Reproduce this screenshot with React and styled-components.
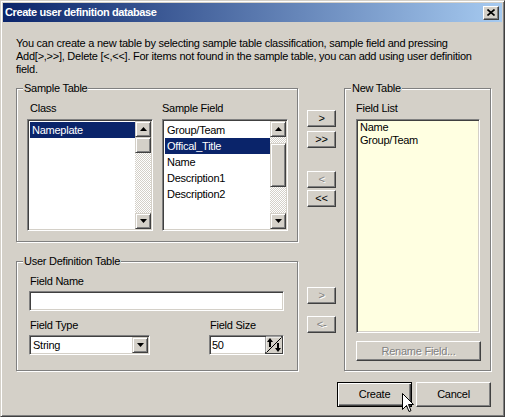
import styled, { createGlobalStyle } from 'styled-components';

const FACE = '#d4d0c8';

const GlobalStyle = createGlobalStyle`
  body { margin: 0; background: #fff; }
  * { box-sizing: border-box; }
`;

const Window = styled.div`
  position: relative;
  width: 505px;
  height: 417px;
  background: ${FACE};
  border: 1px solid;
  border-color: ${FACE} #404040 #404040 ${FACE};
  box-shadow: inset 1px 1px #fff, inset -1px -1px #808080;
  padding: 2px;
  display: flex;
  flex-direction: column;
  font-family: 'Liberation Sans', Tahoma, sans-serif;
  font-size: 11px;
  line-height: 13px;
  letter-spacing: -0.25px;
  color: #000;
`;

const TitleBar = styled.div`
  height: 19px;
  display: flex;
  align-items: center;
  justify-content: space-between;
  padding: 0 3px 0 2px;
  background: linear-gradient(to right, #0a246a, #a6caf0);
`;

const Title = styled.span`
  color: #fff;
  font-weight: bold;
  font-size: 11px;
  letter-spacing: -0.4px;
`;

const CloseBox = styled.div`
  width: 16px;
  height: 14px;
  display: flex;
  align-items: center;
  justify-content: center;
  background: ${FACE};
  border: 1px solid;
  border-color: #fff #404040 #404040 #fff;
  box-shadow: inset -1px -1px #808080;
`;

const Body = styled.div`
  padding: 15px 11px 0 13px;
  display: flex;
  flex-direction: column;
`;

const Intro = styled.p`
  margin: 0;
  white-space: nowrap;
`;

const Main = styled.div`
  display: grid;
  grid-template-columns: 282px 30px 147px;
  grid-template-rows: auto auto;
  column-gap: 8px;
  row-gap: 13px;
  margin-top: 6px;
`;

const Group = styled.fieldset`
  margin: 0;
  min-width: 0;
  padding: 0;
  border: 1px solid #808080;
  box-shadow: 1px 1px 0 #fff, inset 1px 1px 0 #fff;
  grid-column: ${(p) => p.$col || 'auto'};
  grid-row: ${(p) => p.$row || 'auto'};
  display: flex;
  flex-direction: column;
`;

const Inner = styled.div`
  padding: ${(p) => p.$pad};
  display: flex;
  flex-direction: column;
`;

const Legend = styled.legend`
  margin-left: 6px;
  padding: 0 1px;
  background: ${FACE};
`;

const Columns = styled.div`
  display: flex;
  gap: 9px;
`;

const Field = styled.div`
  display: flex;
  flex-direction: column;
  gap: ${(p) => p.$gap ?? 4}px;
`;

const Label = styled.span`
  display: block;
  padding-left: ${(p) => p.$indent || 0}px;
`;

const Sunken = styled.div`
  background: ${(p) => p.$bg || '#fff'};
  border: 1px solid;
  border-color: #808080 #fff #fff #808080;
  box-shadow: inset 1px 1px #404040, inset -1px -1px ${FACE};
  padding: 1px;
`;

const ListBox = styled(Sunken)`
  width: 126px;
  height: 112px;
  display: flex;
`;

const Items = styled.div`
  flex: 1;
  padding: 1px 0 0 1px;
`;

const Item = styled.div`
  height: 16px;
  line-height: 16px;
  padding-left: 2px;
  background: ${(p) => (p.$selected ? '#0a246a' : 'transparent')};
  color: ${(p) => (p.$selected ? '#fff' : '#000')};
  white-space: nowrap;
`;

const ScrollBar = styled.div`
  width: 16px;
  display: flex;
  flex-direction: column;
`;

const Raised = styled.div`
  background: ${FACE};
  border: 1px solid;
  border-color: ${FACE} #404040 #404040 ${FACE};
  box-shadow: inset 1px 1px #fff, inset -1px -1px #808080;
`;

const ArrowBox = styled(Raised)`
  width: 16px;
  height: 16px;
  flex: none;
  display: flex;
  align-items: center;
  justify-content: center;
`;

const Track = styled.div`
  flex: 1;
  display: flex;
  flex-direction: column;
  background: repeating-conic-gradient(#fff 0% 25%, ${FACE} 0% 50%) 0 0 / 2px 2px;
`;

const Thumb = styled(Raised)`
  width: 16px;
  flex: none;
`;

const Memo = styled(Sunken)`
  height: 214px;
  padding: 1px 3px;
`;

const TextBox = styled(Sunken)`
  width: ${(p) => p.$w}px;
  height: 20px;
  display: flex;
  align-items: center;
  padding: 1px 1px 1px 2px;
`;

const BoxText = styled.span`
  flex: 1;
  padding-left: ${(p) => p.$indent || 0}px;
`;

const DropBtn = styled(Raised)`
  width: 16px;
  height: 16px;
  display: flex;
  align-items: center;
  justify-content: center;
`;

const SpinBtn = styled.div`
  width: 18px;
  height: 18px;
  margin: -1px -1px -1px 0;
  display: flex;
`;

const Row = styled.div`
  display: flex;
  justify-content: space-between;
  margin-top: 8px;
`;

const MidCol = styled.div`
  display: flex;
  flex-direction: column;
  align-items: flex-end;
  padding-top: ${(p) => p.$top}px;
`;

const Button = styled.button`
  font: inherit;
  letter-spacing: inherit;
  line-height: 13px;
  margin: ${(p) => p.$mt || 0}px 0 0 0;
  padding: 0;
  width: ${(p) => p.$w}px;
  height: ${(p) => p.$h}px;
  background: ${FACE};
  border: 1px solid;
  border-color: #fff #404040 #404040 #fff;
  box-shadow: inset -1px -1px #808080;
  color: #000;
  &:disabled {
    color: #808080;
    text-shadow: 1px 1px #fff;
  }
`;

const DefaultButton = styled(Button)`
  border-color: #000;
  box-shadow: inset 1px 1px #fff, inset -1px -1px #404040, inset -2px -2px #808080;
`;

const Footer = styled.div`
  display: flex;
  justify-content: flex-end;
  gap: 4px;
  margin-top: 11px;
`;

const Cursor = styled.svg`
  position: absolute;
  left: 401px;
  top: 392px;
`;

const Tri = ({ down }) => (
  <svg width="7" height="4" viewBox="0 0 7 4">
    <polygon points={down ? '0,0 7,0 3.5,4' : '0,4 7,4 3.5,0'} fill="#000" />
  </svg>
);

const List = ({ items, selected, thumbTop, thumbHeight }) => (
  <ListBox>
    <Items>
      {items.map((t) => (
        <Item key={t} $selected={t === selected}>
          {t}
        </Item>
      ))}
    </Items>
    <ScrollBar>
      <ArrowBox>
        <Tri />
      </ArrowBox>
      <Track>
        <Thumb style={{ marginTop: thumbTop, height: thumbHeight }} />
      </Track>
      <ArrowBox>
        <Tri down />
      </ArrowBox>
    </ScrollBar>
  </ListBox>
);

const SpinIcon = () => (
  <svg width="18" height="18" viewBox="0 0 18 18">
    <rect x="0.5" y="0.5" width="17" height="17" fill={FACE} stroke="#404040" />
    <line x1="1" y1="1" x2="16" y2="1" stroke="#fff" />
    <line x1="1" y1="1" x2="1" y2="16" stroke="#fff" />
    <line x1="1.5" y1="16.5" x2="16.5" y2="1.5" stroke="#000" />
    <polygon points="5,2 2,6 8,6" fill="#000" />
    <rect x="4" y="6" width="2" height="5" fill="#000" />
    <polygon points="13,16 10,12 16,12" fill="#000" />
    <rect x="12" y="7" width="2" height="5" fill="#000" />
  </svg>
);

export default function App() {
  return (
    <>
      <GlobalStyle />
      <Window>
        <TitleBar>
          <Title>Create user definition database</Title>
          <CloseBox>
            <svg width="8" height="7" viewBox="0 0 8 7">
              <path d="M0.5 0.5 L7.5 6.5 M7.5 0.5 L0.5 6.5" stroke="#000" strokeWidth="1.6" />
            </svg>
          </CloseBox>
        </TitleBar>
        <Body>
          <Intro>
            You can create a new table by selecting sample table classification, sample field and pressing
            <br />
            Add[&gt;,&gt;&gt;], Delete [&lt;,&lt;&lt;]. For items not found in the sample table, you can add using user definition
            <br />
            field.
          </Intro>
          <Main>
            <Group>
              <Legend>Sample Table</Legend>
              <Inner $pad="7px 9px 10px 10px">
                <Columns>
                  <Field>
                    <Label $indent={3}>Class</Label>
                    <List items={['Nameplate']} selected="Nameplate" thumbTop={0} thumbHeight={16} />
                  </Field>
                  <Field>
                    <Label>Sample Field</Label>
                    <List
                      items={['Group/Team', 'Offical_Title', 'Name', 'Description1', 'Description2']}
                      selected="Offical_Title"
                      thumbTop={6}
                      thumbHeight={44}
                    />
                  </Field>
                </Columns>
              </Inner>
            </Group>

            <MidCol $top={28}>
              <Button $w={29} $h={17}>&gt;</Button>
              <Button $w={29} $h={17} $mt={4}>&gt;&gt;</Button>
              <Button $w={29} $h={17} $mt={23} disabled>&lt;</Button>
              <Button $w={29} $h={17} $mt={2}>&lt;&lt;</Button>
            </MidCol>

            <Group $col="3" $row="1 / span 2">
              <Legend>New Table</Legend>
              <Inner $pad="7px 10px 7px 11px">
                <Field>
                  <Label>Field List</Label>
                  <Memo $bg="#ffffe1">
                    Name
                    <br />
                    Group/Team
                  </Memo>
                </Field>
                <Button $w={125} $h={20} $mt={8} disabled>
                  Rename Field...
                </Button>
              </Inner>
            </Group>

            <Group>
              <Legend>User Definition Table</Legend>
              <Inner $pad="7px 13px 15px 12px">
                <Field $gap={3}>
                  <Label $indent={1}>Field Name</Label>
                  <TextBox $w={255} />
                </Field>
                <Row>
                  <Field $gap={3}>
                    <Label $indent={1}>Field Type</Label>
                    <TextBox $w={121}>
                      <BoxText $indent={1}>String</BoxText>
                      <DropBtn>
                        <Tri down />
                      </DropBtn>
                    </TextBox>
                  </Field>
                  <Field $gap={3}>
                    <Label $indent={1}>Field Size</Label>
                    <TextBox $w={75}>
                      <BoxText>50</BoxText>
                      <SpinBtn>
                        <SpinIcon />
                      </SpinBtn>
                    </TextBox>
                  </Field>
                </Row>
              </Inner>
            </Group>

            <MidCol $top={32}>
              <Button $w={29} $h={17} disabled>&gt;</Button>
              <Button $w={29} $h={17} $mt={12} disabled>&lt;-</Button>
            </MidCol>
          </Main>
          <Footer>
            <DefaultButton $w={75} $h={25}>Create</DefaultButton>
            <Button $w={75} $h={25}>Cancel</Button>
          </Footer>
        </Body>
        <Cursor width="12" height="20" viewBox="0 0 12 20">
          <path d="M0.5 0.5 L0.5 16.5 L4.5 12.5 L7 18.5 L9 17.7 L6.5 11.5 L11.5 11.5 Z" fill="#fff" stroke="#000" />
        </Cursor>
      </Window>
    </>
  );
}
